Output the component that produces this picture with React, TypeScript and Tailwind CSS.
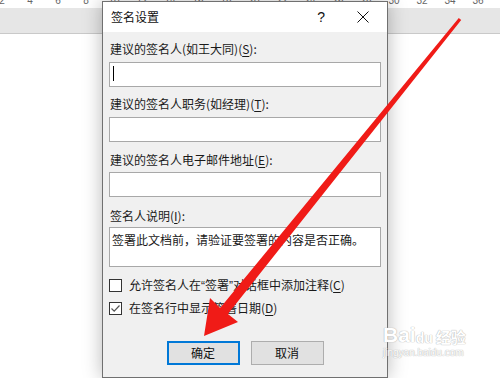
import React from 'react';

const font = { fontFamily: '"Microsoft YaHei", "Noto Sans CJK SC", "Noto Sans", sans-serif' };
const latin = { fontFamily: '"Liberation Sans", sans-serif' };

const rulerNums = Array.from({ length: 18 }, (_, i) => 2 + i * 2);

function Label({ text, acc, tail = '):' }: { text: string; acc: string; tail?: string }) {
  return (
    <div className="text-[12px] leading-[16px] text-[#1a1a1a] whitespace-nowrap">
      {text}(<span className="underline underline-offset-2">{acc}</span>{tail}
    </div>
  );
}

function Field({ h = 'h-[25px]', children }: { h?: string; children?: React.ReactNode }) {
  return <div className={`w-[272px] ${h} border border-[#a8a8a8] bg-white`}>{children}</div>;
}

function Check({ checked }: { checked?: boolean }) {
  return (
    <div className="w-[13px] h-[13px] border border-[#333] bg-white flex items-center justify-center shrink-0">
      {checked && (
        <svg width="11" height="11" viewBox="0 0 11 11">
          <path d="M1.5 5.5 L4.2 8.2 L9.5 2.5" fill="none" stroke="#555" strokeWidth="1.2" />
        </svg>
      )}
    </div>
  );
}

export default function App() {
  return (
    <div className="relative w-[500px] h-[378px] overflow-hidden bg-white" style={font}>
      {/* ruler numbers */}
      <div className="h-[8px] overflow-hidden flex ml-[-12px]">
        {rulerNums.map((n) => (
          <span key={n} className="w-[28px] shrink-0 text-center text-[10px] leading-[10px] mt-[-4px] text-[#666]" style={latin}>
            {n}
          </span>
        ))}
      </div>
      {/* ruler band */}
      <div className="h-[26px] bg-[#e6e6e6] border-b border-[#c9c9c9]" />

      {/* dialog */}
      <div className="absolute left-[102px] top-[1px] w-[286px] h-[377px] border border-[#707070] bg-[#f0f0f0] shadow-[0_0_18px_rgba(0,0,0,0.28)] flex flex-col">
        <div className="h-[30px] bg-white flex items-center shrink-0">
          <span className="ml-[8px] text-[12px] leading-[16px] text-[#111]">签名设置</span>
          <span className="ml-auto mr-[32px] text-[14px] leading-[16px] text-[#111]" style={latin}>?</span>
          <svg width="12" height="12" viewBox="0 0 12 12" className="mr-[18px]">
            <path d="M0.5 0.5 L11.5 11.5 M11.5 0.5 L0.5 11.5" stroke="#111" strokeWidth="1" />
          </svg>
        </div>
        <div className="pl-[6px] flex flex-col">
          <div className="mt-[9px] pl-[1px]"><Label text="建议的签名人(如王大同)" acc="S" /></div>
          <div className="mt-[5px]">
            <Field>
              <div className="ml-[3px] mt-[3px] w-[1px] h-[15px] bg-black" />
            </Field>
          </div>
          <div className="mt-[9px] pl-[1px]"><Label text="建议的签名人职务(如经理)" acc="T" /></div>
          <div className="mt-[5px]"><Field /></div>
          <div className="mt-[10px] pl-[1px]"><Label text="建议的签名人电子邮件地址" acc="E" /></div>
          <div className="mt-[4px]"><Field /></div>
          <div className="mt-[11px] pl-[1px]"><Label text="签名人说明" acc="I" /></div>
          <div className="mt-[3px]">
            <Field h="h-[40px]">
              <div className="pl-[2px] pt-[4px] text-[12px] leading-[16px] text-[#1a1a1a] whitespace-nowrap">
                签署此文档前，请验证要签署的内容是否正确。
              </div>
            </Field>
          </div>
          <div className="mt-[10px] flex items-center h-[16px]">
            <Check />
            <span className="ml-[7px] text-[12px] leading-[16px] text-[#1a1a1a] whitespace-nowrap">
              允许签名人在<span style={latin}>“</span>签署<span style={latin}>”</span>对话框中添加注释(<span className="underline underline-offset-2">C</span>)
            </span>
          </div>
          <div className="mt-[7px] flex items-center h-[16px]">
            <Check checked />
            <span className="ml-[7px] text-[12px] leading-[16px] text-[#1a1a1a] whitespace-nowrap">
              在签名行中显示签署日期(<span className="underline underline-offset-2">D</span>)
            </span>
          </div>
        </div>
        <div className="mt-[25px] flex justify-center gap-[11px]">
          <button className="w-[73px] h-[24px] border-2 border-[#0078d7] bg-[#e1e1e1] text-[12px] leading-[16px] text-[#111]">确定</button>
          <button className="w-[73px] h-[24px] border border-[#adadad] bg-[#e1e1e1] text-[12px] leading-[16px] text-[#111]">取消</button>
        </div>
      </div>

      {/* watermark */}
      <div className="absolute left-[383px] top-[323px] flex flex-col items-start text-white [text-shadow:0_0_1px_#b4b4b4,0_0_1px_#b4b4b4]">
        <div className="flex items-end text-[21px] leading-[24px] font-bold" style={latin}>
          <span>Bai</span>
          <span className="text-[14px] leading-[18px]">du</span>
          <span className="ml-[3px] text-[15px] leading-[20px]" style={font}>经验</span>
        </div>
        <div className="text-[10px] leading-[12px]" style={latin}>jingyan.baidu.com</div>
      </div>

      {/* red arrow */}
      <svg className="absolute left-0 top-0" width="500" height="378" viewBox="0 0 500 378">
        <polygon
          points="458.8,18.1 461.2,19.9 227.9,314.1 238,322 204,336 210,298 220.1,307.9"
          fill="#f01b17"
        />
      </svg>
    </div>
  );
}
